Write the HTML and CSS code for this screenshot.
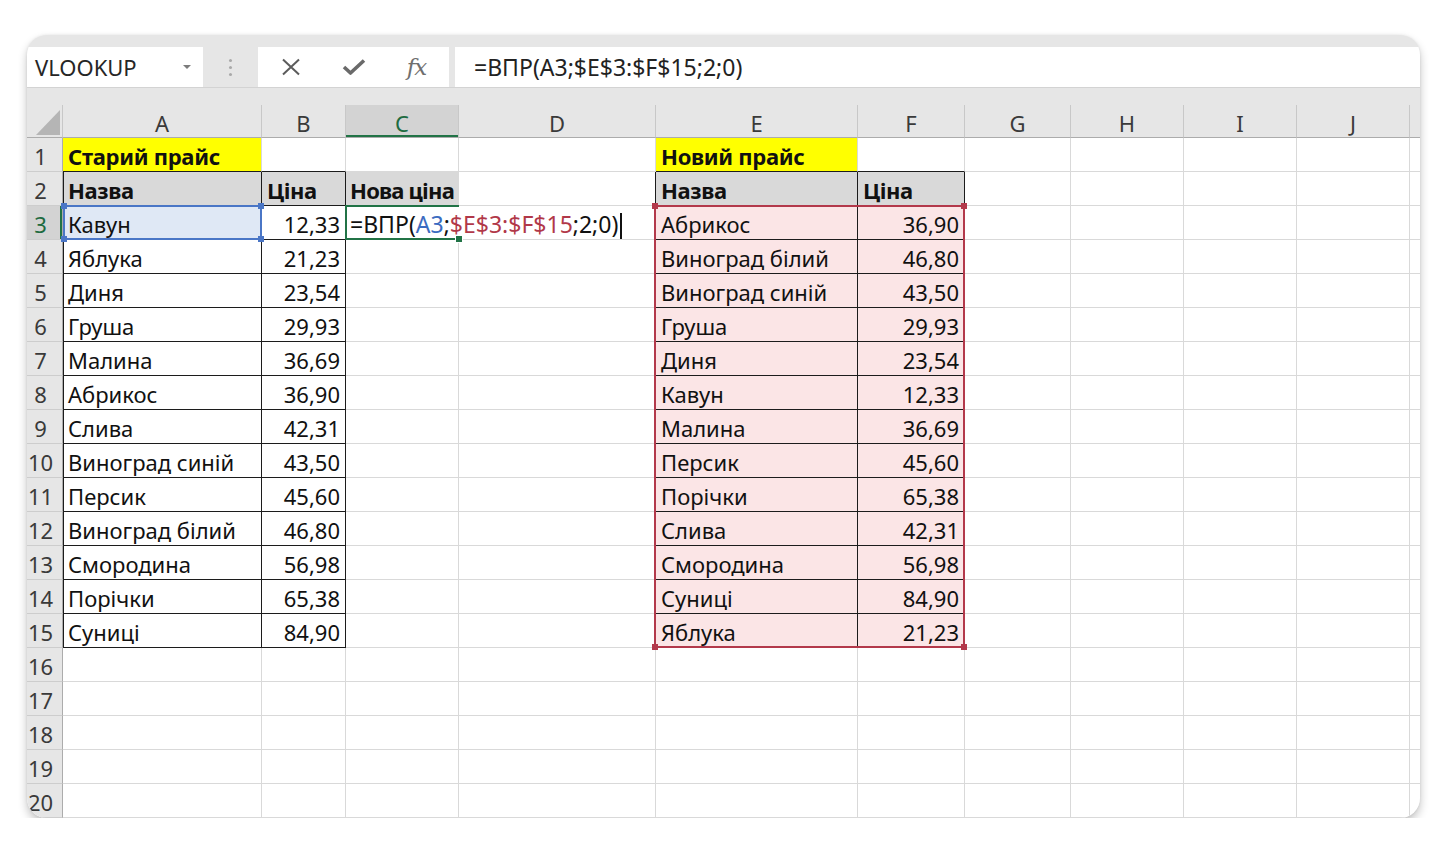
FILE: index.html
```html
<!DOCTYPE html>
<html lang="uk">
<head>
  <meta charset="UTF-8">
  <meta name="viewport" content="width=device-width, initial-scale=1.0">
  <title>ВПР — новий прайс</title>
  <link rel="stylesheet" href="styles.css">
</head>
<body>

  <div class="window">
    <div class="toolbar">
      <div class="name-box">VLOOKUP <span class="arrow"></span></div>
      <div class="grip"><i></i><i></i><i></i></div>
      <div class="fx-buttons">
        <span class="fx-btn">
          <svg width="20" height="18" viewBox="0 0 20 18"><path d="M2 1.5 L18 16.5 M18 1.5 L2 16.5" stroke="#5c5c5c" stroke-width="2" fill="none"/></svg>
        </span>
        <span class="fx-btn">
          <svg width="24" height="18" viewBox="0 0 24 18"><path d="M2 9 L8.5 15 L22 2.5" stroke="#6a6a6a" stroke-width="3.6" fill="none" stroke-linejoin="round"/></svg>
        </span>
        <span class="fx-btn fx">fx</span>
      </div>
      <div class="formula">=ВПР(A3;$E$3:$F$15;2;0)</div>
    </div>

    <div class="sheet" id="sheet">
      <div class="cell col-head corner">
        <svg width="24" height="25" viewBox="0 0 24 25"><polygon points="24,0 24,25 0,25" fill="#b5b5b5"/></svg>
      </div>

      <!-- range highlights drawn over the cells -->
      <div class="ref ref-a3"><i class="nw"></i><i class="ne"></i><i class="sw"></i><i class="se"></i></div>
      <div class="ref ref-ef"><i class="nw"></i><i class="ne"></i><i class="sw"></i><i class="se"></i></div>
      <div class="ref ref-c3"><i class="handle"></i></div>
    </div>
  </div>

  <script>
    const cols = ['A', 'B', 'C', 'D', 'E', 'F', 'G', 'H', 'I', 'J', ''];

    const oldPrices = [
      ['Кавун', '12,33'], ['Яблука', '21,23'], ['Диня', '23,54'], ['Груша', '29,93'],
      ['Малина', '36,69'], ['Абрикос', '36,90'], ['Слива', '42,31'], ['Виноград синій', '43,50'],
      ['Персик', '45,60'], ['Виноград білий', '46,80'], ['Смородина', '56,98'], ['Порічки', '65,38'],
      ['Суниці', '84,90']
    ];

    const newPrices = [
      ['Абрикос', '36,90'], ['Виноград білий', '46,80'], ['Виноград синій', '43,50'], ['Груша', '29,93'],
      ['Диня', '23,54'], ['Кавун', '12,33'], ['Малина', '36,69'], ['Персик', '45,60'],
      ['Порічки', '65,38'], ['Слива', '42,31'], ['Смородина', '56,98'], ['Суниці', '84,90'],
      ['Яблука', '21,23']
    ];

    const sheet = document.getElementById('sheet');
    const frag = document.createDocumentFragment();

    function cell(cls, text) {
      const d = document.createElement('div');
      d.className = 'cell ' + cls;
      if (text !== undefined) d.textContent = text;
      frag.appendChild(d);
      return d;
    }

    cols.forEach(c => cell('col-head' + (c === 'C' ? ' active' : ''), c));

    for (let r = 1; r <= 20; r++) {
      cell('row-head' + (r === 3 ? ' active' : ''), r);
      const inTable = r >= 3 && r <= 15;
      const oldRow = oldPrices[r - 3];
      const newRow = newPrices[r - 3];

      cols.forEach(c => {
        if (c === 'A') {
          if (r === 1) cell('yellow bold bt', 'Старий прайс');
          else if (r === 2) cell('head bt br bl', 'Назва');
          else if (inTable) cell('bt br bl' + (r === 3 ? ' picked' : ''), oldRow[0]);
          else cell('');
        } else if (c === 'B') {
          if (r === 1) cell('bt');
          else if (r === 2) cell('head bt br', 'Ціна');
          else if (inTable) cell('num bt br', oldRow[1]);
          else cell('');
        } else if (c === 'C') {
          if (r === 2) cell('head tight', 'Нова ціна');
          else if (r === 3) {
            const ed = cell('editing');
            ed.innerHTML = '=ВПР(<span class="ref-blue">A3</span>;<span class="ref-red">$E$3:$F$15</span>;2;0)<span class="caret"></span>';
          } else cell('');
        } else if (c === 'D') {
          cell(r >= 2 && r <= 15 ? 'br' : '');
        } else if (c === 'E') {
          if (r === 1) cell('yellow bold bt', 'Новий прайс');
          else if (r === 2) cell('head bt br', 'Назва');
          else if (inTable) cell('pink bt br', newRow[0]);
          else cell('');
        } else if (c === 'F') {
          if (r === 1) cell('bt');
          else if (r === 2) cell('head bt br', 'Ціна');
          else if (inTable) cell('pink num bt br', newRow[1]);
          else cell('');
        } else {
          cell('');
        }
      });
    }

    sheet.insertBefore(frag, sheet.querySelector('.ref'));
  </script>
</body>
</html>
```

FILE: styles.css
```css
body {
  margin: 0;
  background: #ffffff;
  font-family: "Noto Sans", "Open Sans", sans-serif;
}

.window {
  width: 1393px;
  height: 783px;
  margin: 35px 0 0 27px;
  background: #e6e6e6;
  border-radius: 20px;
  overflow: hidden;
  box-shadow: 0 5px 10px rgba(0, 0, 0, 0.24), 0 0 3px rgba(0, 0, 0, 0.08);
}

/* formula bar */
.toolbar {
  display: flex;
  height: 40px;
  padding-top: 12px;
  border-bottom: 1px solid #d3d3d3;
  margin-bottom: 17px;
}

.name-box {
  width: 176px;
  box-sizing: border-box;
  padding: 0 12px 0 8px;
  display: flex;
  align-items: center;
  justify-content: space-between;
  background: #fff;
  font-size: 22px;
  color: #262626;
}

.arrow {
  border-left: 4px solid transparent;
  border-right: 4px solid transparent;
  border-top: 4px solid #7c7c7c;
}

.grip {
  width: 55px;
  display: flex;
  flex-direction: column;
  align-items: center;
  justify-content: center;
  gap: 4px;
}

.grip i {
  width: 3px;
  height: 3px;
  border-radius: 50%;
  background: #a9a9a9;
}

.fx-buttons {
  width: 191px;
  box-sizing: border-box;
  padding: 0 1px;
  display: flex;
  background: #fff;
}

.fx-btn {
  width: 63px;
  display: flex;
  align-items: center;
  justify-content: center;
}

.fx {
  font-family: "DejaVu Serif", "Liberation Serif", serif;
  font-style: italic;
  font-size: 23px;
  color: #6f6f6f;
  letter-spacing: -1px;
}

.formula {
  flex: 1;
  margin-left: 6px;
  padding-left: 19px;
  background: #fff;
  font-size: 23px;
  line-height: 40px;
  color: #222;
}

/* grid */
.sheet {
  position: relative;
  display: grid;
  grid-template-columns: 36px 199px 84px 113px 197px 202px 107px 106px 113px 113px 113px 1fr;
  grid-template-rows: 33px;
  grid-auto-rows: 34px;
  background: #fff;
  font-size: 22px;
  color: #111;
}

.cell {
  box-sizing: border-box;
  border-right: 1px solid #d9d9d9;
  border-bottom: 1px solid #d9d9d9;
  padding: 4px 5px 0;
  line-height: 29px;
  white-space: nowrap;
  overflow: hidden;
}

.col-head {
  background: #e6e6e6;
  border-right-color: #c8c8c8;
  border-bottom-color: #acacac;
  text-align: center;
  line-height: 28px;
  color: #3a3a3a;
}

.corner {
  display: flex;
  align-items: flex-end;
  justify-content: flex-end;
  padding: 0 2px 2px 0;
}

.row-head {
  background: #e6e6e6;
  border-right-color: #acacac;
  border-bottom-color: #cdcdcd;
  text-align: center;
  padding: 4px 8px 0 0;
  color: #3a3a3a;
}

.active {
  background: #d3d3d3;
  color: #1e6b40;
}

.col-head.active { box-shadow: inset 0 -2px 0 #217346; }
.row-head.active { box-shadow: inset -2px 0 0 #217346; }

.bt { border-bottom-color: #1c1c1c; }
.br { border-right-color: #1c1c1c; }
.bl { box-shadow: inset 1px 0 0 #1c1c1c; }

.bold { font-weight: 700; letter-spacing: -0.3px; }
.yellow { background: #ffff00; }
.head { background: #d9d9d9; font-weight: 700; letter-spacing: -0.4px; }
.tight { padding-left: 4px; letter-spacing: -0.8px; overflow: visible; }
.num { text-align: right; }
.pink { background: #fbe5e6; }
.picked { background: #dfe8f5; }

.editing {
  overflow: visible;
  border-right-color: transparent;
  padding-left: 4px;
  font-size: 23px;
}

.ref-blue { color: #3b6cc1; }
.ref-red { color: #b13849; }

.caret {
  display: inline-block;
  width: 2px;
  height: 26px;
  margin-left: 2px;
  background: #111;
  vertical-align: -6px;
}

/* range outlines */
.ref {
  position: absolute;
  box-sizing: border-box;
  pointer-events: none;
}

.ref i {
  position: absolute;
  width: 6px;
  height: 6px;
  background: currentColor;
}

.ref .nw { top: -4px; left: -4px; }
.ref .ne { top: -4px; right: -4px; }
.ref .sw { bottom: -4px; left: -4px; }
.ref .se { bottom: -4px; right: -4px; }

.ref-a3 {
  grid-column: 2 / 3;
  grid-row: 4 / 5;
  top: -1px;
  left: 0;
  right: 0;
  bottom: 0;
  border: 2px solid #4a76c6;
  color: #4a76c6;
}

.ref-ef {
  grid-column: 6 / 8;
  grid-row: 4 / 17;
  top: -1px;
  left: -2px;
  right: 0;
  bottom: 0;
  border: 2px solid #b3394b;
  color: #b3394b;
}

.ref-c3 {
  grid-column: 4 / 5;
  grid-row: 4 / 5;
  top: -1px;
  left: -1px;
  right: 0;
  bottom: 0;
  border: 2px solid #217346;
  border-right: none;
  color: #217346;
}

.ref-c3 .handle {
  right: -4px;
  bottom: -5px;
  width: 6px;
  height: 6px;
  border: 1px solid #fff;
}
```
